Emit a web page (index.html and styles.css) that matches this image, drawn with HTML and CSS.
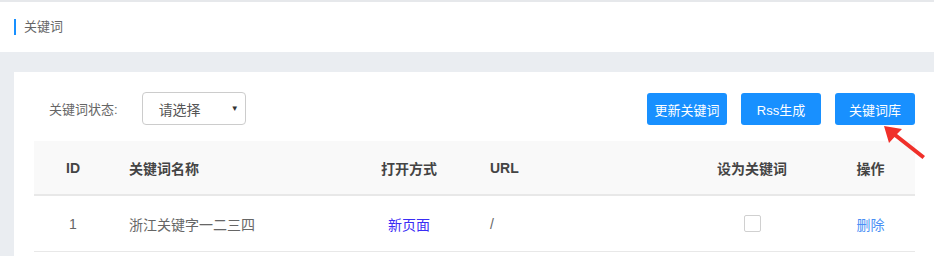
FILE: index.html
```html
<!doctype html>
<html lang="zh-CN">

<head>
  <title>关键词</title>
  <meta charset="utf-8">
  <meta name="viewport" content="width=device-width, initial-scale=1">
  <link rel="stylesheet" href="styles.css">
</head>

<body>
  <div class="topbar">
    <div class="crumb">关键词</div>
  </div>

  <div class="main">
    <div class="card">
      <div class="toolbar">
        <div class="filter">
          <span class="filter-label">关键词状态:</span>
          <div class="select">
            <span>请选择</span>
            <span class="caret">&#9660;</span>
          </div>
        </div>
        <div class="actions">
          <button class="btn">更新关键词</button>
          <button class="btn">Rss生成</button>
          <button class="btn btn-lib">关键词库
            <!-- red pointer drawn on top of the screenshot -->
            <svg class="pointer" width="44" height="34" viewBox="0 0 44 34">
              <path d="M0 0 L18 3 L13 8 L41 30 L38.5 33 L10.5 11 L5 17 Z" fill="#f0302a" />
            </svg>
          </button>
        </div>
      </div>

      <table class="grid">
        <colgroup>
          <col style="width: 78px">
          <col style="width: 238px">
          <col style="width: 118px">
          <col style="width: 210px">
          <col style="width: 148px">
          <col>
        </colgroup>
        <thead>
          <tr>
            <th class="center">ID</th>
            <th class="name">关键词名称</th>
            <th class="center">打开方式</th>
            <th class="url">URL</th>
            <th class="center">设为关键词</th>
            <th class="center">操作</th>
          </tr>
        </thead>
        <tbody>
          <tr>
            <td class="center">1</td>
            <td class="name">浙江关键字一二三四</td>
            <td class="center"><span class="open-mode">新页面</span></td>
            <td class="url">/</td>
            <td class="center"><span class="check"></span></td>
            <td class="center"><a class="del">删除</a></td>
          </tr>
        </tbody>
      </table>
    </div>
  </div>
</body>

</html>
```

FILE: styles.css
```css
html {
  height: 100%;
}

body {
  margin: 0;
  padding: 0;
  min-height: 100%;
  background-color: #eaedf1;
  font-family: 'Liberation Sans', 'Noto Sans CJK SC', sans-serif;
  color: #666666;
  overflow: hidden;
}

.topbar {
  height: 50px;
  border-top: 2px solid #e6e8eb;
  background-color: #ffffff;
  display: flex;
  align-items: center;
  padding-left: 14px;
}

.crumb {
  font-size: 13px;
  line-height: 16px;
  border-left: 2px solid #1890ff;
  padding-left: 8px;
  color: #666666;
}

.main {
  padding: 20px 0 0 14px;
}

.card {
  background-color: #ffffff;
  padding: 20px 19px 10px 20px;
}

.toolbar {
  display: flex;
  justify-content: space-between;
  align-items: center;
  margin-bottom: 16px;
}

.filter {
  display: flex;
  align-items: center;
  padding-left: 15px;
}

.filter-label {
  font-size: 13px;
  margin-right: 24px;
}

.select {
  width: 104px;
  height: 33px;
  box-sizing: border-box;
  border: 1px solid #cccccc;
  border-radius: 4px;
  display: flex;
  align-items: center;
  justify-content: space-between;
  padding: 0 6px 0 16px;
  font-size: 14px;
  color: #555555;
}

.caret {
  font-size: 8px;
  color: #333333;
}

.actions {
  display: flex;
  gap: 14px;
  margin-top: 1px;
}

.btn {
  width: 80px;
  height: 32px;
  border: none;
  border-radius: 3px;
  background-color: #1890ff;
  color: #ffffff;
  font-family: inherit;
  font-size: 13px;
  padding: 0;
}

.btn-lib {
  position: relative;
}

.pointer {
  position: absolute;
  left: 49px;
  top: 33px;
}

.grid {
  width: 100%;
  border-collapse: collapse;
  table-layout: fixed;
  font-size: 14px;
}

.grid th {
  height: 51px;
  background-color: #f9f9f9;
  color: #444444;
  font-weight: bold;
  border-bottom: 2px solid #e8e8e8;
}

.grid td {
  height: 53px;
  border-bottom: 1px solid #e8e8e8;
  color: #666666;
}

.center {
  text-align: center;
}

.name {
  text-align: left;
  padding-left: 17px;
}

.url {
  text-align: left;
  padding-left: 22px;
}

.open-mode {
  color: #3a2cf5;
}

.check {
  display: inline-block;
  width: 15px;
  height: 15px;
  border: 1px solid #d0d0d0;
  border-radius: 2px;
  vertical-align: middle;
}

.del {
  color: #4a90f5;
  cursor: pointer;
}
```
